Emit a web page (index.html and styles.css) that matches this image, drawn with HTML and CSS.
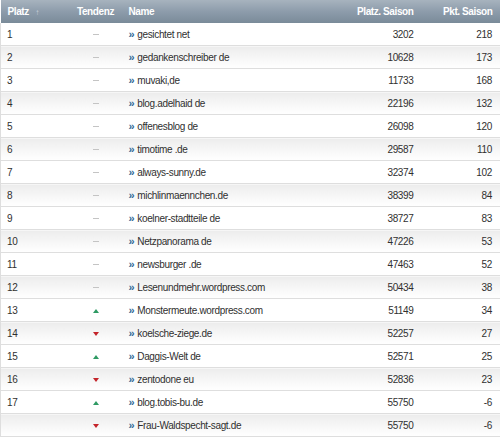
FILE: index.html
```html
<!DOCTYPE html>
<html>
<head>
<meta charset="utf-8">
<link rel="stylesheet" href="styles.css">
</head>
<body>
<table class="rank">
<colgroup>
<col class="w-platz"><col class="w-tend"><col class="w-name"><col class="w-ps"><col class="w-pk">
</colgroup>
<thead>
<tr>
<th class="c-platz">Platz <span class="sort">&#8593;</span></th>
<th class="c-tend">Tendenz</th>
<th class="c-name">Name</th>
<th class="c-ps">Platz. Saison</th>
<th class="c-pk">Pkt. Saison</th>
</tr>
</thead>
<tbody>
<tr><td class="c-platz">1</td><td class="c-tend"><span class="dash"></span></td><td class="c-name"><span class="raq">&raquo;</span>gesichtet net</td><td class="c-ps">3202</td><td class="c-pk">218</td></tr>
<tr><td class="c-platz">2</td><td class="c-tend"><span class="dash"></span></td><td class="c-name"><span class="raq">&raquo;</span>gedankenschreiber de</td><td class="c-ps">10628</td><td class="c-pk">173</td></tr>
<tr><td class="c-platz">3</td><td class="c-tend"><span class="dash"></span></td><td class="c-name"><span class="raq">&raquo;</span>muvaki,de</td><td class="c-ps">11733</td><td class="c-pk">168</td></tr>
<tr><td class="c-platz">4</td><td class="c-tend"><span class="dash"></span></td><td class="c-name"><span class="raq">&raquo;</span>blog.adelhaid de</td><td class="c-ps">22196</td><td class="c-pk">132</td></tr>
<tr><td class="c-platz">5</td><td class="c-tend"><span class="dash"></span></td><td class="c-name"><span class="raq">&raquo;</span>offenesblog de</td><td class="c-ps">26098</td><td class="c-pk">120</td></tr>
<tr><td class="c-platz">6</td><td class="c-tend"><span class="dash"></span></td><td class="c-name"><span class="raq">&raquo;</span>timotime .de</td><td class="c-ps">29587</td><td class="c-pk">110</td></tr>
<tr><td class="c-platz">7</td><td class="c-tend"><span class="dash"></span></td><td class="c-name"><span class="raq">&raquo;</span>always-sunny.de</td><td class="c-ps">32374</td><td class="c-pk">102</td></tr>
<tr><td class="c-platz">8</td><td class="c-tend"><span class="dash"></span></td><td class="c-name"><span class="raq">&raquo;</span>michlinmaennchen.de</td><td class="c-ps">38399</td><td class="c-pk">84</td></tr>
<tr><td class="c-platz">9</td><td class="c-tend"><span class="dash"></span></td><td class="c-name"><span class="raq">&raquo;</span>koelner-stadtteile de</td><td class="c-ps">38727</td><td class="c-pk">83</td></tr>
<tr><td class="c-platz">10</td><td class="c-tend"><span class="dash"></span></td><td class="c-name"><span class="raq">&raquo;</span>Netzpanorama de</td><td class="c-ps">47226</td><td class="c-pk">53</td></tr>
<tr><td class="c-platz">11</td><td class="c-tend"><span class="dash"></span></td><td class="c-name"><span class="raq">&raquo;</span>newsburger .de</td><td class="c-ps">47463</td><td class="c-pk">52</td></tr>
<tr><td class="c-platz">12</td><td class="c-tend"><span class="dash"></span></td><td class="c-name"><span class="raq">&raquo;</span>Lesenundmehr.wordpress.com</td><td class="c-ps">50434</td><td class="c-pk">38</td></tr>
<tr><td class="c-platz">13</td><td class="c-tend"><span class="up"></span></td><td class="c-name"><span class="raq">&raquo;</span>Monstermeute.wordpress.com</td><td class="c-ps">51149</td><td class="c-pk">34</td></tr>
<tr><td class="c-platz">14</td><td class="c-tend"><span class="down"></span></td><td class="c-name"><span class="raq">&raquo;</span>koelsche-ziege.de</td><td class="c-ps">52257</td><td class="c-pk">27</td></tr>
<tr><td class="c-platz">15</td><td class="c-tend"><span class="up"></span></td><td class="c-name"><span class="raq">&raquo;</span>Daggis-Welt de</td><td class="c-ps">52571</td><td class="c-pk">25</td></tr>
<tr><td class="c-platz">16</td><td class="c-tend"><span class="down"></span></td><td class="c-name"><span class="raq">&raquo;</span>zentodone eu</td><td class="c-ps">52836</td><td class="c-pk">23</td></tr>
<tr><td class="c-platz">17</td><td class="c-tend"><span class="up"></span></td><td class="c-name"><span class="raq">&raquo;</span>blog.tobis-bu.de</td><td class="c-ps">55750</td><td class="c-pk">-6</td></tr>
<tr><td class="c-platz"></td><td class="c-tend"><span class="down"></span></td><td class="c-name"><span class="raq">&raquo;</span>Frau-Waldspecht-sagt.de</td><td class="c-ps">55750</td><td class="c-pk">-6</td></tr>
</tbody>
</table>
</body>
</html>
```

FILE: styles.css
```css
html, body {
  margin: 0;
  padding: 0;
  background: #ffffff;
}

.rank {
  width: 500px;
  border-collapse: collapse;
  table-layout: fixed;
  font-family: "Liberation Sans", Arial, sans-serif;
  font-size: 10px;
  letter-spacing: -0.35px;
  color: #303030;
}

.w-platz { width: 70px; }
.w-tend { width: 50px; }
.w-name { width: 220px; }
.w-ps { width: 80px; }
.w-pk { width: 80px; }

.rank th {
  height: 23px;
  padding: 0;
  color: #ffffff;
  font-weight: bold;
  font-size: 10px;
  letter-spacing: -0.4px;
  background: linear-gradient(to bottom, #a7b3be 0%, #8d9cab 50%, #7a8b99 100%);
  text-align: left;
  vertical-align: middle;
}

.rank td {
  height: 22px;
  padding: 0;
  border-bottom: 1px solid #dedede;
  vertical-align: middle;
  background: #ffffff;
}

.rank tbody tr:nth-child(even) td {
  background: linear-gradient(to bottom, #ececec 0%, #f6f6f6 50%, #ffffff 100%);
}

.rank tbody tr td:first-child {
  border-left: 1px solid #dedede;
}

.rank tbody tr td:last-child {
  border-right: 1px solid #dedede;
}

.rank th.c-platz { padding-left: 7px; }
.rank td.c-platz { padding-left: 6px; }
.rank th.c-tend, .rank td.c-tend { text-align: center; }
.rank th.c-name, .rank td.c-name { padding-left: 8px; }
.rank th.c-ps, .rank td.c-ps { text-align: right; padding-right: 7px; }
.rank th.c-pk, .rank td.c-pk { text-align: right; padding-right: 8px; }

.sort {
  display: inline-block;
  margin-left: 4px;
  font-size: 8px;
  color: #c9d1d8;
}

.raq {
  display: inline-block;
  color: #2f6a97;
  font-weight: bold;
  font-size: 11px;
  line-height: 10px;
  margin-right: 3px;
}

.dash {
  display: inline-block;
  width: 6px;
  height: 1px;
  background: #c4c4c4;
  vertical-align: middle;
}

.up {
  display: inline-block;
  width: 0;
  height: 0;
  border-left: 3px solid transparent;
  border-right: 3px solid transparent;
  border-bottom: 4px solid #2e9a63;
  vertical-align: middle;
}

.down {
  display: inline-block;
  width: 0;
  height: 0;
  border-left: 3px solid transparent;
  border-right: 3px solid transparent;
  border-top: 4px solid #c4242a;
  vertical-align: middle;
}
```
